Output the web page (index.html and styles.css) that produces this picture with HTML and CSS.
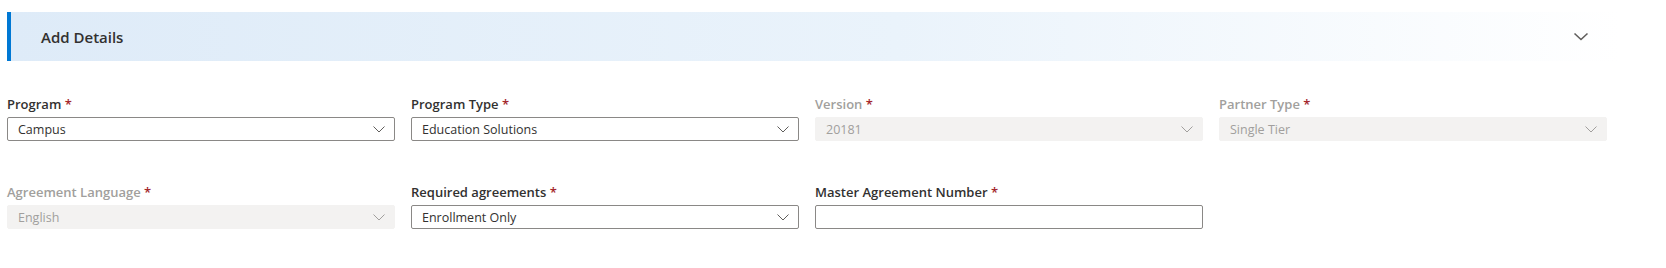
FILE: index.html
```html
<!DOCTYPE html>
<html>
<head>
	<meta charset="utf-8"/>
	<title>Add Details</title>
	<link rel="stylesheet" href="styles.css">
</head>
<body>
<div class="page">
	<div class="section-head">
		<span class="section-title">Add Details</span>
		<svg class="head-chevron" width="16" height="10" viewBox="0 0 16 10">
			<polyline points="1.5,1.5 8,7.5 14.5,1.5" fill="none" stroke="#605e5c" stroke-width="1.6"/>
		</svg>
	</div>

	<div class="form-grid">
		<div class="field">
			<div class="field-label">Program <span class="req">*</span></div>
			<div class="dropdown">
				<span class="dd-value">Campus</span>
				<svg class="dd-chevron" width="12" height="7" viewBox="0 0 12 7"><polyline points="0.5,0.5 6,6 11.5,0.5" fill="none" stroke="currentColor" stroke-width="1"/></svg>
			</div>
		</div>
		<div class="field">
			<div class="field-label">Program Type <span class="req">*</span></div>
			<div class="dropdown">
				<span class="dd-value">Education Solutions</span>
				<svg class="dd-chevron" width="12" height="7" viewBox="0 0 12 7"><polyline points="0.5,0.5 6,6 11.5,0.5" fill="none" stroke="currentColor" stroke-width="1"/></svg>
			</div>
		</div>
		<div class="field disabled">
			<div class="field-label">Version <span class="req">*</span></div>
			<div class="dropdown">
				<span class="dd-value">20181</span>
				<svg class="dd-chevron" width="12" height="7" viewBox="0 0 12 7"><polyline points="0.5,0.5 6,6 11.5,0.5" fill="none" stroke="currentColor" stroke-width="1"/></svg>
			</div>
		</div>
		<div class="field disabled">
			<div class="field-label">Partner Type <span class="req">*</span></div>
			<div class="dropdown">
				<span class="dd-value">Single Tier</span>
				<svg class="dd-chevron" width="12" height="7" viewBox="0 0 12 7"><polyline points="0.5,0.5 6,6 11.5,0.5" fill="none" stroke="currentColor" stroke-width="1"/></svg>
			</div>
		</div>

		<div class="field disabled">
			<div class="field-label">Agreement Language <span class="req">*</span></div>
			<div class="dropdown">
				<span class="dd-value">English</span>
				<svg class="dd-chevron" width="12" height="7" viewBox="0 0 12 7"><polyline points="0.5,0.5 6,6 11.5,0.5" fill="none" stroke="currentColor" stroke-width="1"/></svg>
			</div>
		</div>
		<div class="field">
			<div class="field-label">Required agreements <span class="req">*</span></div>
			<div class="dropdown">
				<span class="dd-value">Enrollment Only</span>
				<svg class="dd-chevron" width="12" height="7" viewBox="0 0 12 7"><polyline points="0.5,0.5 6,6 11.5,0.5" fill="none" stroke="currentColor" stroke-width="1"/></svg>
			</div>
		</div>
		<div class="field">
			<div class="field-label">Master Agreement Number <span class="req">*</span></div>
			<input class="text-input" type="text">
		</div>
	</div>
</div>
</body>
</html>
```

FILE: styles.css
```css
	body{
		margin: 0;
		background: #ffffff;
		color: #323130;
	}
	*{
		font-family: "Open Sans", "Noto Sans", sans-serif;
		box-sizing: border-box;
	}

	.page{
		padding: 12px 0 0 7px;
		width: 1620px;
	}

	.section-head{
		display: flex;
		align-items: center;
		justify-content: space-between;
		height: 49px;
		border-left: 4px solid #0078d4;
		padding: 1px 31px 0 30px;
		background: linear-gradient(90deg, #deebf8 0%, #eaf3fb 55%, #ffffff 100%);
	}
	.section-title{
		font-size: 15px;
		font-weight: 600;
		color: #323130;
	}
	.head-chevron{
		display: block;
	}

	.form-grid{
		display: grid;
		grid-template-columns: repeat(4, 388px);
		column-gap: 16px;
		row-gap: 42px;
		margin-top: 34px;
	}

	.field-label{
		font-size: 13px;
		font-weight: 600;
		line-height: 18px;
		height: 18px;
		margin-bottom: 4px;
		color: #323130;
		white-space: nowrap;
	}
	.req{
		color: #a4262c;
	}

	.dropdown{
		display: flex;
		align-items: center;
		justify-content: space-between;
		height: 24px;
		border: 1px solid #8a8886;
		border-radius: 2px;
		padding: 0 9px 0 10px;
		background: #ffffff;
		color: #605e5c;
	}
	.dd-value{
		font-size: 12.5px;
		color: #323130;
	}
	.dd-chevron{
		display: block;
	}

	.disabled .field-label{
		color: #a19f9d;
	}
	.disabled .dropdown{
		border-color: #f3f2f1;
		background: #f3f2f1;
		color: #a19f9d;
	}
	.disabled .dd-value{
		color: #a19f9d;
	}

	.text-input{
		display: block;
		width: 100%;
		height: 24px;
		border: 1px solid #8a8886;
		border-radius: 2px;
		padding: 0 10px;
		font-size: 12.5px;
		background: #ffffff;
		outline: none;
	}
```
